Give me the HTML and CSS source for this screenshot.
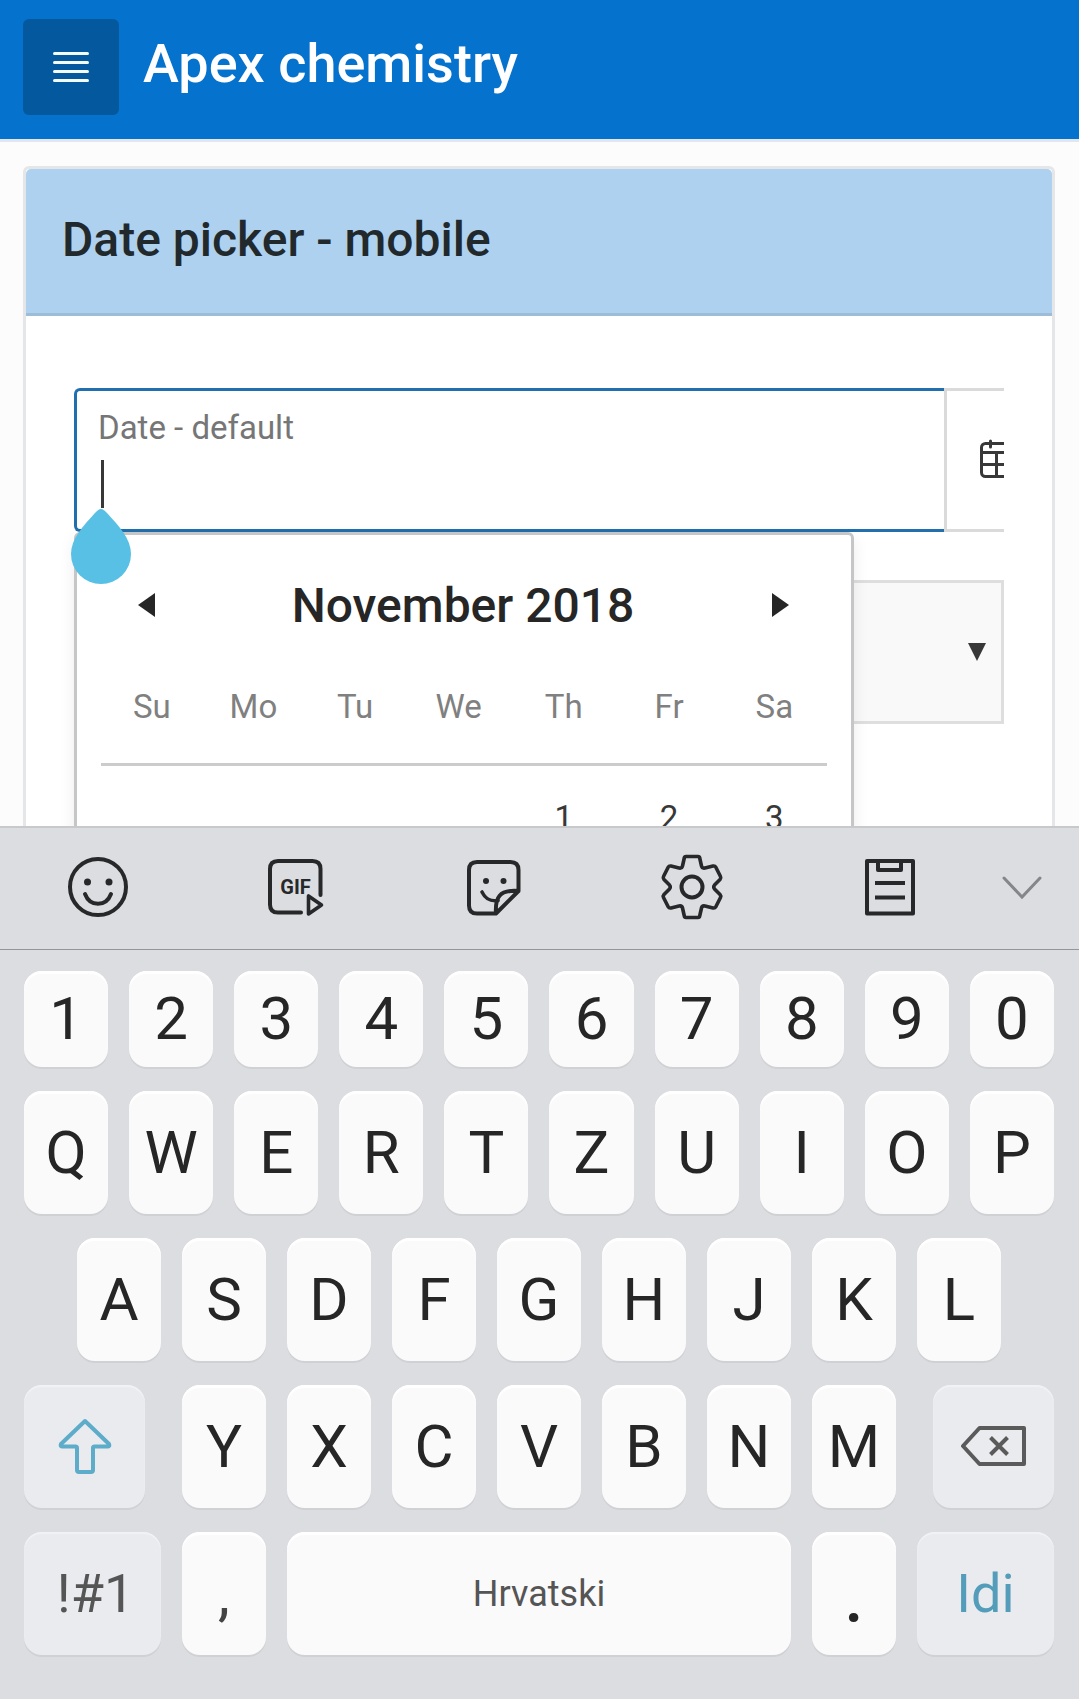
FILE: index.html
```html
<!DOCTYPE html>
<html lang="en">
<head>
<meta charset="utf-8">
<meta name="viewport" content="width=device-width">
<title>Apex chemistry</title>
<link rel="stylesheet" href="styles.css">
</head>
<body>
<div class="page">
  <header class="topbar">
    <button class="menu-btn" type="button" aria-label="Menu">
      <svg width="36" height="30" viewBox="0 0 36 30"><path d="M1.5 1.5h33M1.5 10.500h33M1.5 19.500h33M1.5 28.500h33" fill="none" stroke="#f2fcff" stroke-width="3" stroke-linecap="round"/></svg>
    </button>
    <h1 class="app-title">Apex chemistry</h1>
  </header>
  <main class="content">
    <section class="card">
      <h2 class="card-title">Date picker - mobile</h2>
      <form class="card-body">
        <div class="date-field">
          <div class="input-group">
            <div class="input-wrap">
              <label class="field-label" for="date">Date - default</label>
              <input class="date-input" id="date" type="text">
            </div>
            <button class="cal-btn" type="button" aria-label="Open calendar">
              <svg width="42" height="42" viewBox="0 1 42 42" fill="none" stroke="#383838" stroke-width="3"><rect x="1.500" y="5.500" width="39" height="33" rx="4"/><path d="M1.500 14.500h39M1.500 26.500h39M16.500 14.500v24M28.500 14.500v24"/><path d="M10.500 3v6M31.500 3v6" stroke-linecap="round"/></svg>
            </button>
          </div>
          <span class="caret"></span>
          <div class="picker">
            <div class="picker-head">
              <button class="nav-btn" type="button" aria-label="Previous month"><svg width="17" height="24" viewBox="0 0 17 24"><path d="M17 0v24L0 12z" fill="#262626"/></svg></button>
              <span class="month">November 2018</span>
              <button class="nav-btn" type="button" aria-label="Next month"><svg width="17" height="24" viewBox="0 0 17 24"><path d="M0 0v24L17 12z" fill="#262626"/></svg></button>
            </div>
            <table class="days">
              <colgroup><col class="col-early" span="3"><col span="4"></colgroup>
              <thead><tr><th>Su</th><th>Mo</th><th>Tu</th><th>We</th><th>Th</th><th>Fr</th><th>Sa</th></tr></thead>
              <tbody><tr><td></td><td></td><td></td><td></td><td>1</td><td>2</td><td>3</td></tr></tbody>
            </table>
          </div>
          <svg class="handle" width="60" height="75" viewBox="0 0 60 75"><path d="M30 0C32 0 34 2 36 4C48 17 60 30 60 45A30 30 0 0 1 0 45C0 30 12 17 24 4C26 2 28 0 30 0z" fill="#58c0e4"/></svg>
        </div>
        <div class="select-wrap">
          <select class="select" aria-label="Option"><option></option></select>
          <svg class="select-arrow" width="18" height="18" viewBox="0 0 18 18"><path d="M0 0h18L9 18z" fill="#383838"/></svg>
        </div>
      </form>
    </section>
  </main>
</div>

<div class="keyboard">
  <div class="tools">
    <button class="tool" type="button" aria-label="Emoji"><svg width="64" height="64" viewBox="0 0 64 64" fill="none" stroke="#262829" stroke-width="4"><circle cx="31" cy="32" r="28"/><path d="M18 39c5 13 21 13 26 0" stroke-linecap="round"/><g fill="#262829" stroke="none"><circle cx="20.500" cy="27" r="3.500"/><circle cx="42" cy="27" r="3.500"/></g></svg></button>
    <button class="tool" type="button" aria-label="GIF"><svg width="64" height="64" viewBox="0 0 64 64" fill="none" stroke="#262829" stroke-width="4" stroke-linecap="round" stroke-linejoin="round"><path d="M36 57.500H13q-8 0-8-8V14q0-8 8-8H47.500q8 0 8 8V40"/><path d="M43.500 41v18l13-9z" stroke-width="3.600"/><text class="gif-text" x="30.500" y="39" text-anchor="middle">GIF</text></svg></button>
    <button class="tool" type="button" aria-label="Stickers"><svg width="64" height="64" viewBox="0 0 64 64" fill="none" stroke="#262829" stroke-width="4" stroke-linecap="round" stroke-linejoin="round"><path d="M33 58.500H14q-8 0-8-8V15q0-8 8-8H47.500q8 0 8 8V36L33 58.500c-1-16 3-24 22.500-22.500"/><path d="M19 37c4 8 9 9.500 16 8.500" stroke-width="3.600"/><g fill="#262829" stroke="none"><circle cx="23" cy="26" r="3"/><circle cx="40.500" cy="26" r="3"/></g></svg></button>
    <button class="tool" type="button" aria-label="Settings"><svg width="64" height="66" viewBox="0 0 64 66" fill="none" stroke="#262829" stroke-width="3.600" stroke-linejoin="round"><path d="M26 2.500H38Q39.500 2.500 39.700 4L41.500 12Q42 14.500 45 14L53 12Q55 11.700 55.700 13L60.500 22.500Q61.300 24 60 25.500L54.500 31Q53 33 54.500 35L60 40.500Q61.300 42 60.500 43.500L55.700 53Q55 54.300 53 54L45 52Q42 51.500 41.500 54L39.700 62Q39.500 63.500 38 63.500H26Q24.500 63.500 24.300 62L22.500 54Q22 51.500 19 52L11 54Q9 54.300 8.300 53L3.500 43.500Q2.700 42 4 40.500L9.500 35Q11 33 9.500 31L4 25.500Q2.700 24 3.500 22.500L8.300 13Q9 11.700 11 12L19 14Q22 14.500 22.500 12L24.300 4Q24.500 2.500 26 2.500z"/><circle cx="32" cy="33" r="10.500" stroke-width="4"/></svg></button>
    <button class="tool" type="button" aria-label="Clipboard"><svg width="64" height="64" viewBox="0 0 64 64" fill="none" stroke="#262829" stroke-width="4" stroke-linejoin="round"><path d="M9 6H55V58.500H9z"/><path d="M20 6v9h23V6M17 28H47M17 42.500H47"/></svg></button>
    <button class="tool" type="button" aria-label="Hide tools"><svg width="40" height="26" viewBox="0 0 40 26" fill="none" stroke="#85868a" stroke-width="3" stroke-linecap="round"><path d="M2 4L20 23L38 4"/></svg></button>
  </div>
  <div class="keys">
    <div class="row numbers">
      <button class="key">1</button><button class="key">2</button><button class="key">3</button><button class="key">4</button><button class="key">5</button><button class="key">6</button><button class="key">7</button><button class="key">8</button><button class="key">9</button><button class="key">0</button>
    </div>
    <div class="row">
      <button class="key">Q</button><button class="key">W</button><button class="key">E</button><button class="key">R</button><button class="key">T</button><button class="key">Z</button><button class="key">U</button><button class="key">I</button><button class="key">O</button><button class="key">P</button>
    </div>
    <div class="row home">
      <button class="key">A</button><button class="key">S</button><button class="key">D</button><button class="key">F</button><button class="key">G</button><button class="key">H</button><button class="key">J</button><button class="key">K</button><button class="key">L</button>
    </div>
    <div class="row lower">
      <button class="key fn shift" aria-label="Shift"><svg width="54" height="56" viewBox="0 1 54 56"><path d="M27 3L51 26Q52 28.500 50 28.500H36.500Q35 28.500 35 30V52Q35 54 33 54H21Q19 54 19 52V30Q19 28.500 17.500 28.500H4Q2 28.500 3 26z" fill="none" stroke="#5cacca" stroke-width="4" stroke-linejoin="round"/></svg></button>
      <button class="key">Y</button><button class="key">X</button><button class="key">C</button><button class="key">V</button><button class="key">B</button><button class="key">N</button><button class="key">M</button>
      <button class="key fn backspace" aria-label="Backspace"><svg width="66" height="40" viewBox="1 2 66 40" fill="none" stroke="#5a5a5a" stroke-width="4" stroke-linejoin="round"><path d="M19.500 3H64V39H19.500L3 21z"/><path d="M30.500 12.500L47.500 29.500M47.500 12.500L30.500 29.500"/></svg></button>
    </div>
    <div class="row bottom">
      <button class="key fn symbols">!#1</button><button class="key comma">,</button><button class="key space">Hrvatski</button><button class="key period">.</button><button class="key fn go">Idi</button>
    </div>
  </div>
</div>
</body>
</html>
```
FILE: styles.css
```css
* { box-sizing: border-box; }

body {
  margin: 0;
  height: 100vh;
  display: flex;
  flex-direction: column;
  font-family: Roboto, "Liberation Sans", sans-serif;
  color: #262626;
  background: #fcfcfd;
}

button {
  font: inherit;
  color: inherit;
  border: 0;
  padding: 0;
  background: none;
}

svg {
  display: block;
  overflow: visible;
}

.page {
  flex: 1;
  min-height: 0;
  overflow: hidden;
}

/* Top bar */
.topbar {
  display: flex;
  gap: 24px;
  padding: 19px 23px 24px;
  background: #0572ce;
  border-bottom: 3px solid #e1e7ec;
}

.menu-btn {
  display: flex;
  align-items: center;
  justify-content: center;
  width: 96px;
  height: 96px;
  border-radius: 6px;
  background: #04589d;
}

.app-title {
  margin: 0;
  font-size: 54px;
  font-weight: 500;
  line-height: 90px;
  color: #fff;
}

/* Card */
.content { padding: 24px 24px 24px 23px; }

.card {
  border: 3px solid #e4e6e8;
  border-radius: 6px;
  background: #fff;
}

.card-title {
  margin: 0;
  padding: 0 36px 2px;
  font-size: 48px;
  font-weight: 500;
  line-height: 142px;
  color: #22292d;
  background: #aed1ef;
  border-bottom: 3px solid #9dbcd8;
  border-radius: 5px 5px 0 0;
}

.card-body {
  display: flex;
  flex-direction: column;
  gap: 48px;
  padding: 72px 48px 240px;
}

/* Date field */
.date-field { position: relative; z-index: 1; }

.input-group {
  display: flex;
  height: 144px;
  overflow: hidden;
}

.input-wrap {
  position: relative;
  flex: 1;
}

.field-label {
  position: absolute;
  left: 24px;
  top: 20px;
  font-size: 33px;
  line-height: 40px;
  color: #767676;
}

.date-input {
  width: 100%;
  height: 100%;
  padding: 64px 24px 16px;
  font: inherit;
  font-size: 42px;
  background: #fff;
  border: 3px solid #226fae;
  border-right: 0;
  border-radius: 6px 0 0 6px;
  outline: 0;
}

.cal-btn {
  flex: none;
  width: 108px;
  margin-right: -48px;
  padding-left: 33px;
  border: 3px solid #dadada;
}

.caret {
  position: absolute;
  left: 27px;
  top: 72px;
  width: 3px;
  height: 48px;
  background: #383838;
}

.handle {
  position: absolute;
  left: -3px;
  top: 121px;
}

/* Calendar popup */
.picker {
  position: absolute;
  left: 0;
  top: 144px;
  width: 780px;
  padding: 24px;
  background: #fff;
  border: 3px solid #c4c6c8;
  border-radius: 6px;
  box-shadow: 0 6px 16px rgba(0, 0, 0, 0.08);
}

.picker-head {
  display: flex;
  align-items: center;
  justify-content: space-between;
  height: 92px;
  padding: 0 17px 0 15px;
}

.nav-btn {
  display: flex;
  align-items: center;
  justify-content: center;
  width: 60px;
  height: 60px;
}

.month {
  font-size: 48px;
  font-weight: 500;
}

.days {
  width: 100%;
  table-layout: fixed;
  border-collapse: collapse;
  font-size: 33px;
  text-align: center;
}

.col-early { width: 14%; }

.days th {
  height: 113px;
  padding: 0;
  font-weight: 400;
  color: #808080;
  border-bottom: 3px solid #ccc;
}

.days td {
  height: 106px;
  padding: 0;
  color: #383838;
}

/* Select */
.select-wrap {
  display: flex;
  position: relative;
}

.select {
  flex: 1;
  height: 144px;
  appearance: none;
  background: #f9f9f9;
  border: 3px solid #dedede;
  border-radius: 6px 0 0 6px;
}

.select-arrow {
  position: absolute;
  right: 18px;
  top: 63px;
}

/* Keyboard */
.keyboard {
  background: #dcdde1;
  border-top: 2px solid #c8c9cb;
}

.tools {
  display: grid;
  grid-template-columns: repeat(5, 3fr) 1fr;
  height: 122px;
  padding: 0 24px 3px 0;
  border-bottom: 1px solid #94969a;
}

.tool {
  display: flex;
  align-items: center;
  justify-content: center;
}

.gif-text {
  font-size: 20px;
  font-weight: 700;
  fill: #262829;
  stroke: none;
}

.keys {
  display: flex;
  flex-direction: column;
  gap: 24px;
  padding: 21px 25px 44px 24px;
}

.row {
  display: grid;
  grid-template-columns: repeat(10, 1fr);
  gap: 21px;
  height: 123px;
}

.numbers { height: 96px; }

.home {
  grid-template-columns: repeat(9, 1fr);
  padding: 0 53px;
}

.lower { grid-template-columns: 137fr repeat(7, 84fr) 137fr; }

.bottom { grid-template-columns: 137fr 84fr 504fr 84fr 137fr; }

.key {
  display: flex;
  align-items: center;
  justify-content: center;
  min-width: 0;
  font-size: 60px;
  line-height: 72px;
  background: #fafafa;
  border-radius: 18px;
  box-shadow: 0 2px 0 #d0d1d5, inset 0 3px 1px #fff;
}

.fn {
  background: #e9ebef;
  box-shadow: 0 2px 0 #d0d1d5, inset 0 2px 1px #f1f2f5;
}

.shift { margin-right: 16px; }
.backspace { margin-left: 16px; }

.symbols, .go { font-size: 54px; }
.symbols { padding-left: 6px; color: #555; }
.go { color: #549dba; }
.comma { color: #444; }
.space { font-size: 36px; color: #555; }
.period { font-size: 84px; }
```
